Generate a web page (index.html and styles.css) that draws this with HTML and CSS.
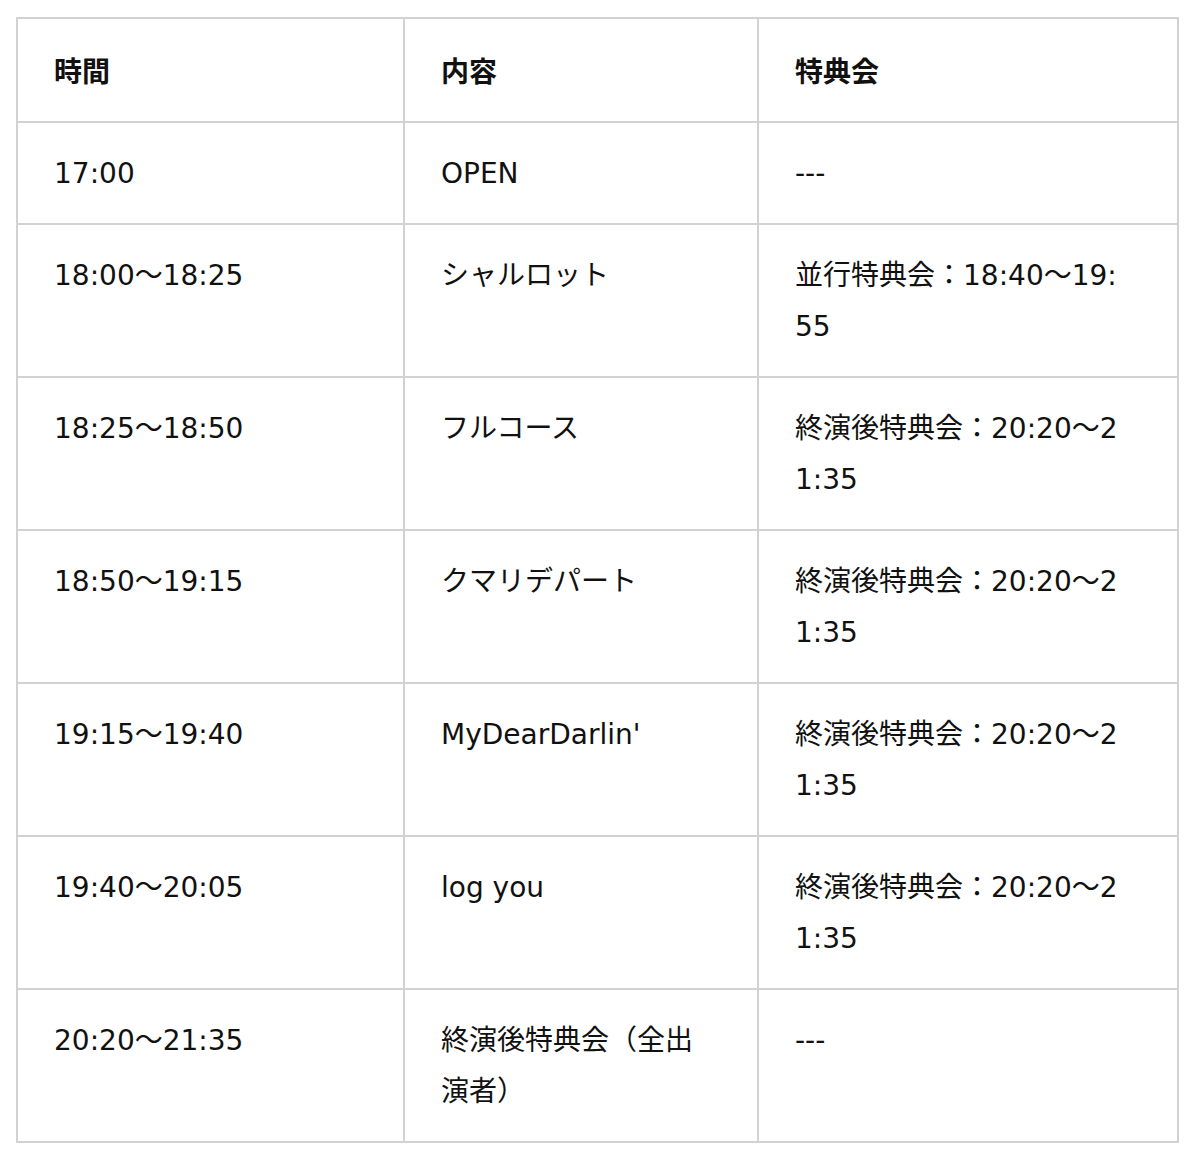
FILE: index.html
```html
<!DOCTYPE html>
<html lang="ja">
<head>
<meta charset="utf-8">
<link rel="stylesheet" href="styles.css">
</head>
<body>
<div class="wrap">
<table class="schedule">
  <colgroup>
    <col class="c1"><col class="c2"><col class="c3">
  </colgroup>
  <thead>
    <tr><th>時間</th><th>内容</th><th>特典会</th></tr>
  </thead>
  <tbody>
    <tr><td>17:00</td><td>OPEN</td><td>---</td></tr>
    <tr><td>18:00〜18:25</td><td>シャルロット</td><td>並行特典会：18:40〜19:55</td></tr>
    <tr><td>18:25〜18:50</td><td>フルコース</td><td>終演後特典会：20:20〜21:35</td></tr>
    <tr><td>18:50〜19:15</td><td>クマリデパート</td><td>終演後特典会：20:20〜21:35</td></tr>
    <tr><td>19:15〜19:40</td><td>MyDearDarlin'</td><td>終演後特典会：20:20〜21:35</td></tr>
    <tr><td>19:40〜20:05</td><td>log you</td><td>終演後特典会：20:20〜21:35</td></tr>
    <tr><td>20:20〜21:35</td><td>終演後特典会（全出演者）</td><td>---</td></tr>
  </tbody>
</table>
</div>
</body>
</html>
```

FILE: styles.css
```css
html, body {
  margin: 0;
  padding: 0;
  background: #ffffff;
}
.wrap {
  padding: 17px 22px 0 16px;
}
.schedule {
  width: 1161px;
  border-collapse: collapse;
  table-layout: fixed;
  font-family: "DejaVu Sans", "Noto Sans CJK JP", sans-serif;
  font-size: 28px;
  line-height: 51px;
  color: #111;
}
.c1 { width: 387px; }
.c2 { width: 354px; }
.c3 { width: 420px; }
.schedule th,
.schedule td {
  border: 2px solid #d2d2d2;
  padding: 24.5px 36px;
  text-align: left;
  vertical-align: top;
  word-break: break-all;
}
.schedule th {
  font-family: "Noto Sans CJK JP", sans-serif;
  font-weight: 700;
  padding-top: 25.5px;
  padding-bottom: 25.5px;
}
.schedule td {
  font-weight: 400;
}
.schedule td:nth-child(2) {
  padding-right: 50px;
}
.schedule td:nth-child(3) {
  padding-right: 51px;
}
```
